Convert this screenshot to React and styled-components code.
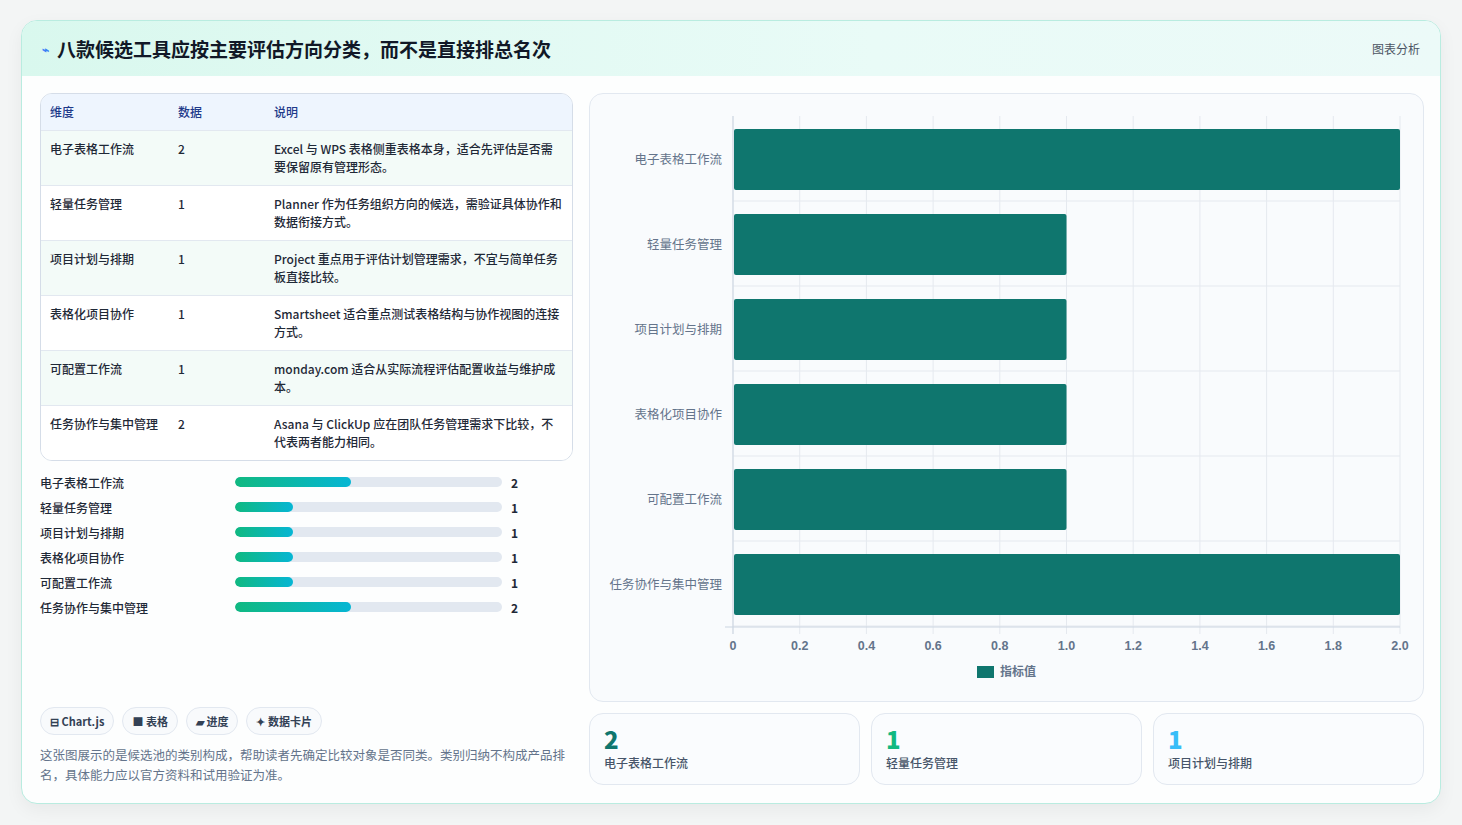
import React from "react";
import styled, { createGlobalStyle } from "styled-components";

const G = createGlobalStyle`
  body{margin:0;background:#f3f5f5;font-family:"Noto Sans CJK SC","Noto Sans",sans-serif;}
`;
const Page = styled.div`padding:20px 21px 22px 21px;`;
const Card = styled.div`background:#fdfefe;border:1px solid #b9ece0;border-radius:16px;overflow:hidden;box-shadow:0 6px 18px rgba(0,0,0,.05);`;
const Header = styled.div`height:55px;display:flex;align-items:center;justify-content:space-between;padding:0 20px 0 20px;background:linear-gradient(90deg,#d9f8ee,#e9fbf7 60%,#ecfaf8);`;
const Title = styled.h1`margin:0;font-size:19px;font-weight:700;color:#111827;display:flex;align-items:center;gap:8px;`;
const Small = styled.span`font-size:12px;color:#4b5563;`;
const Body = styled.div`display:grid;grid-template-columns:533px 835px;gap:16px;padding:17px 18px 18px 18px;`;
const Left = styled.div`display:flex;flex-direction:column;height:692px;`;
const Table = styled.div`border:1px solid #d5dde8;border-radius:12px;overflow:hidden;`;
const Row = styled.div`display:grid;grid-template-columns:128px 96px 1fr;padding:${p=>p.h?"9px 9px":"9px 9px"};min-height:${p=>p.h?"15px":"35px"};background:${p=>p.h?"#eef5fe":p.alt?"#f3fbf8":"#fff"};border-top:${p=>p.h?"none":"1px solid #e2e8f0"};font-size:12px;line-height:18px;color:${p=>p.h?"#1e3a8a":"#1f2937"};font-weight:500;`;
const Bars = styled.div`display:flex;flex-direction:column;gap:7px;margin-top:12px;`;
const BarRow = styled.div`display:grid;grid-template-columns:195px 267px 20px;gap:0 0;align-items:center;font-size:12px;height:18px;color:#1f2937;font-weight:500;`;
const Track = styled.div`height:10px;border-radius:5px;background:#e2e8f0;overflow:hidden;`;
const Fill = styled.div`height:100%;border-radius:5px;background:linear-gradient(90deg,#10b981,#06b6d4);`;
const Val = styled.span`padding-left:9px;font-weight:700;`;
const Tags = styled.div`margin-top:auto;display:flex;gap:8px;`;
const Tag = styled.span`border:1px solid #e2e8f0;border-radius:14px;background:#f8fafc;padding:5px 9px;font-size:11px;font-weight:700;color:#334155;`;
const Desc = styled.p`margin:10px 0 0;font-size:12.5px;line-height:20px;color:#64748b;`;
const Right = styled.div`display:flex;flex-direction:column;gap:11px;`;
const ChartBox = styled.div`height:607px;border:1px solid #e2e8f0;border-radius:14px;background:#f9fbfd;`;
const Stats = styled.div`display:grid;grid-template-columns:repeat(3,1fr);gap:11px;`;
const Stat = styled.div`height:72px;border:1px solid #e2e8f0;border-radius:14px;background:#fafcfe;padding:10px 14px;box-sizing:border-box;`;
const Num = styled.div`font-size:24px;font-weight:800;line-height:30px;color:${p=>p.c};`;
const Lab = styled.div`font-size:12px;color:#475569;font-weight:500;`;

const rows=[
["电子表格工作流","2","Excel 与 WPS 表格侧重表格本身，适合先评估是否需要保留原有管理形态。"],
["轻量任务管理","1","Planner 作为任务组织方向的候选，需验证具体协作和数据衔接方式。"],
["项目计划与排期","1","Project 重点用于评估计划管理需求，不宜与简单任务板直接比较。"],
["表格化项目协作","1","Smartsheet 适合重点测试表格结构与协作视图的连接方式。"],
["可配置工作流","1","monday.com 适合从实际流程评估配置收益与维护成本。"],
["任务协作与集中管理","2","Asana 与 ClickUp 应在团队任务管理需求下比较，不代表两者能力相同。"]];

function Chart(){
  const x0=143,x1=810,y0=22,step=85;
  const xs=[...Array(11)].map((_,i)=>x0+(x1-x0)*i/10);
  return <svg width="835" height="607">
    {xs.map((x,i)=><line key={i} x1={x} x2={x} y1={y0} y2={540} stroke="#e5e9ef"/>)}
    {rows.map((_,i)=><line key={i} x1={x0} x2={x1} y1={y0+85*(i+1)} y2={y0+85*(i+1)} stroke="#e5e9ef"/>)}
    <line x1={x0} x2={x0} y1={y0} y2={540} stroke="#cbd5e1"/>
    <line x1={x0-8} x2={x1} y1={533} y2={533} stroke="#cbd5e1"/>
    {rows.map((r,i)=>{const y=y0+13+step*i;const w=(x1-x0)*(+r[1])/2;return <g key={i}>
      <rect x={x0+1} y={y} width={w-1} height={61} rx="2" fill="#0f766e"/>
      <text x={x0-11} y={y+35} textAnchor="end" fontSize="12.5" fill="#64748b">{r[0]}</text></g>})}
    {xs.map((x,i)=><text key={i} x={x} y={556} textAnchor="middle" fontSize="12.5" fontWeight="700" fill="#64748b" fontFamily="Liberation Sans Narrow, Liberation Sans">{i===10?"2.0":i===5?"1.0":i===0?"0":(i*0.2).toFixed(1)}</text>)}
    <rect x="387" y="572" width="17" height="12" fill="#0f766e"/>
    <text x="410" y="582" fontSize="12" fontWeight="700" fill="#64748b">指标值</text>
  </svg>;
}

export default function App(){
  return <Page><G/><Card>
    <Header><Title><span style={{color:"#3b82f6",fontSize:12}}>⌁</span>八款候选工具应按主要评估方向分类，而不是直接排总名次</Title><Small>图表分析</Small></Header>
    <Body>
      <Left>
        <Table>
          <Row h><span>维度</span><span>数据</span><span>说明</span></Row>
          {rows.map((r,i)=><Row key={i} alt={i%2===0}><span>{r[0]}</span><span>{r[1]}</span><span>{r[2]}</span></Row>)}
        </Table>
        <Bars>
          {rows.map((r,i)=><BarRow key={i}><span>{r[0]}</span><Track><Fill style={{width:(r[1]==="2"?43.5:21.7)+"%"}}/></Track><Val>{r[1]}</Val></BarRow>)}
        </Bars>
        <Tags><Tag>⊟ Chart.js</Tag><Tag>■ 表格</Tag><Tag>▰ 进度</Tag><Tag>✦ 数据卡片</Tag></Tags>
        <Desc>这张图展示的是候选池的类别构成，帮助读者先确定比较对象是否同类。类别归纳不构成产品排名，具体能力应以官方资料和试用验证为准。</Desc>
      </Left>
      <Right>
        <ChartBox><Chart/></ChartBox>
        <Stats>
          <Stat><Num c="#0f766e">2</Num><Lab>电子表格工作流</Lab></Stat>
          <Stat><Num c="#10b981">1</Num><Lab>轻量任务管理</Lab></Stat>
          <Stat><Num c="#38bdf8">1</Num><Lab>项目计划与排期</Lab></Stat>
        </Stats>
      </Right>
    </Body>
  </Card></Page>;
}
